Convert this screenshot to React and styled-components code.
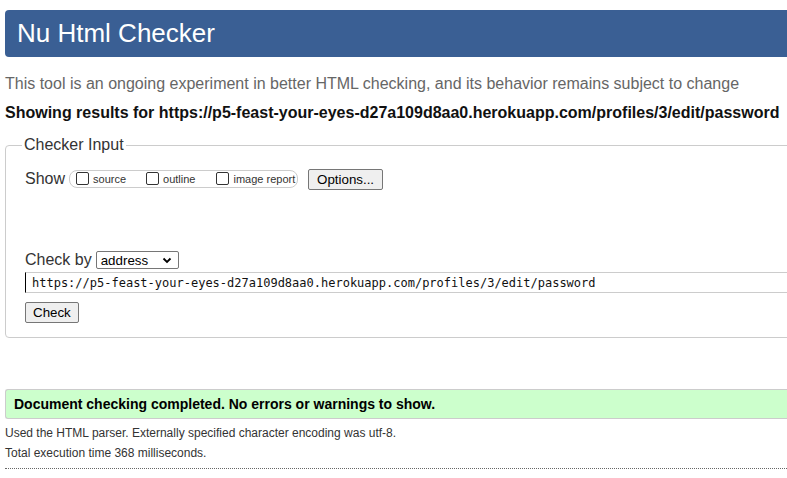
import React from 'react';
import styled, { createGlobalStyle } from 'styled-components';

const GlobalStyle = createGlobalStyle`
	html,
	body {
		margin: 0;
		padding: 0;
		overflow: hidden;
		background: #fff;
	}

	body {
		font-family: 'Liberation Sans', Arial, sans-serif;
		color: #333;
	}
`;

const Page = styled.div`
	width: 840px;
	padding: 10px 0 0 5px;
`;

const Header = styled.h1`
	margin: 0;
	height: 47px;
	line-height: 47px;
	padding-left: 12px;
	background: #3a5f94;
	border-radius: 4px 0 0 4px;
	color: #fff;
	font-size: 26px;
	font-weight: normal;
`;

const Intro = styled.p`
	margin: ${({ $top }) => $top}px 0 0;
	font-size: 16px;
	line-height: 20px;
	color: ${({ $strong }) => ($strong ? '#111' : '#666')};
	font-weight: ${({ $strong }) => ($strong ? 'bold' : 'normal')};
	white-space: nowrap;
`;

const Fieldset = styled.fieldset`
	margin: 12px 0 0;
	padding: 0 0 14px 19px;
	border: 1px solid #ccc;
	border-radius: 4px 0 0 4px;
	min-width: 0;
`;

const Legend = styled.legend`
	margin-left: -3px;
	padding: 0 2px;
	font-size: 16px;
	line-height: 20px;
	color: #333;
`;

const Row = styled.div`
	display: flex;
	align-items: center;
	margin-top: ${({ $top }) => $top}px;
	height: ${({ $h }) => $h}px;
`;

const Label = styled.span`
	font-size: 16px;
	color: #333;
`;

const ShowGroup = styled.div`
	display: flex;
	align-items: center;
	margin-left: 4px;
	width: 229px;
	height: 18px;
	border: 1px solid #ccc;
	border-radius: 8px;
	padding-left: 6px;
	box-sizing: border-box;
`;

const Option = styled.label`
	display: flex;
	align-items: center;
	gap: 4px;
	margin-right: ${({ $gap }) => $gap}px;
	font-size: 11px;
	color: #333;
`;

const Box = styled.span`
	display: inline-block;
	width: 11px;
	height: 11px;
	border: 1px solid #333;
	border-radius: 2px;
	background: #fff;
	position: relative;
	top: -1px;
`;

const Button = styled.button`
	font-family: 'Liberation Sans', Arial, sans-serif;
	font-size: 13.33px;
	color: #000;
	background: #efefef;
	border: 1px solid #767676;
	border-radius: 2px;
	height: 21px;
	padding: 0 ${({ $pad }) => $pad}px;
	margin-left: ${({ $left }) => $left || 0}px;
	line-height: 19px;
	cursor: pointer;
`;

const Select = styled.div`
	display: flex;
	align-items: center;
	justify-content: space-between;
	margin-left: 4px;
	width: 83px;
	height: 18px;
	border: 1px solid #767676;
	border-radius: 2px;
	box-sizing: border-box;
	padding: 0 6px 0 4px;
	font-size: 13.33px;
	color: #000;

	& svg {
		width: 10px;
		height: 10px;
	}
`;

const UrlInput = styled.div`
	height: 21px;
	line-height: 21px;
	box-sizing: border-box;
	margin-top: 2px;
	border: 1px solid #ccc;
	border-left: 1px solid #000;
	border-right: none;
	padding-left: 6px;
	font-family: 'DejaVu Sans Mono', monospace;
	font-size: 12px;
	color: #111;
	white-space: nowrap;
`;

const Success = styled.div`
	margin-top: 51px;
	height: 30px;
	line-height: 28px;
	box-sizing: border-box;
	padding-left: 8px;
	background: #ccffcc;
	border: 1px solid #ccc;
	border-right: none;
	border-radius: 3px 0 0 3px;
	font-size: 14px;
	font-weight: bold;
	color: #000;
`;

const Note = styled.p`
	margin: ${({ $top }) => $top}px 0 0;
	font-size: 12px;
	line-height: 20px;
	color: #333;
`;

const Rule = styled.hr`
	margin: 5px 0 0;
	border: none;
	border-top: 1px dotted #666;
`;

const Chevron = () => (
	<svg viewBox="0 0 10 10">
		<path d="M1.5 3.5 L5 7 L8.5 3.5" fill="none" stroke="#000" strokeWidth="1.8" />
	</svg>
);

const url =
	'https://p5-feast-your-eyes-d27a109d8aa0.herokuapp.com/profiles/3/edit/password';

const App = () => {
	return (
		<Page>
			<GlobalStyle />
			<Header>Nu Html Checker</Header>
			<Intro $top={17}>
				This tool is an ongoing experiment in better HTML checking, and its
				behavior remains subject to change
			</Intro>
			<Intro $top={9} $strong>
				Showing results for {url}
			</Intro>
			<Fieldset>
				<Legend>Checker Input</Legend>
				<Row $top={13} $h={22}>
					<Label>Show</Label>
					<ShowGroup>
						<Option $gap={20}>
							<Box />
							source
						</Option>
						<Option $gap={21}>
							<Box />
							outline
						</Option>
						<Option $gap={0}>
							<Box />
							image report
						</Option>
					</ShowGroup>
					<Button $pad={8} $left={10}>
						Options...
					</Button>
				</Row>
				<Row $top={60} $h={20}>
					<Label>Check by</Label>
					<Select>
						address
						<Chevron />
					</Select>
				</Row>
				<UrlInput>{url}</UrlInput>
				<Row $top={9} $h={21}>
					<Button $pad={7}>Check</Button>
				</Row>
			</Fieldset>
			<Success>Document checking completed. No errors or warnings to show.</Success>
			<Note $top={4}>
				Used the HTML parser. Externally specified character encoding was utf-8.
			</Note>
			<Note $top={0}>Total execution time 368 milliseconds.</Note>
			<Rule />
		</Page>
	);
};

export default App;
